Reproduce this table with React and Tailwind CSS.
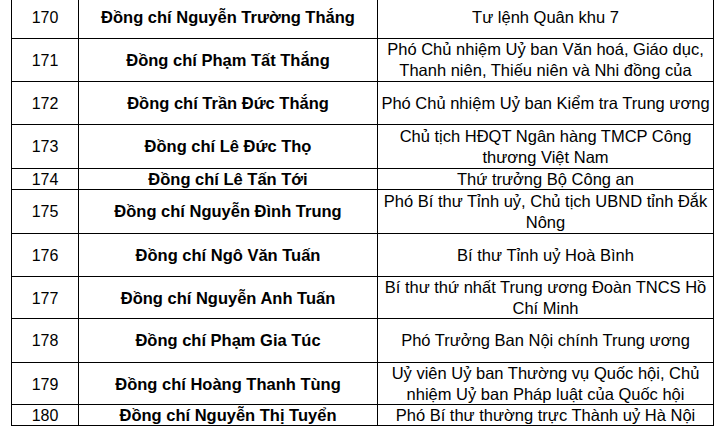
import React from "react";

const rows = [
  { n: "170", name: "Đồng chí Nguyễn Trường Thắng", role: ["Tư lệnh Quân khu 7"], h: 39, first: true },
  { n: "171", name: "Đồng chí Phạm Tất Thắng", role: ["Phó Chủ nhiệm Uỷ ban Văn hoá, Giáo dục,", "Thanh niên, Thiếu niên và Nhi đồng của"], h: 43 },
  { n: "172", name: "Đồng chí Trần Đức Thắng", role: ["Phó Chủ nhiệm Uỷ ban Kiểm tra Trung ương"], h: 43 },
  { n: "173", name: "Đồng chí Lê Đức Thọ", role: ["Chủ tịch HĐQT Ngân hàng TMCP Công", "thương Việt Nam"], h: 44 },
  { n: "174", name: "Đồng chí Lê Tấn Tới", role: ["Thứ trưởng Bộ Công an"], h: 21 },
  { n: "175", name: "Đồng chí Nguyễn Đình Trung", role: ["Phó Bí thư Tỉnh uỷ, Chủ tịch UBND tỉnh Đắk", "Nông"], h: 44 },
  { n: "176", name: "Đồng chí Ngô Văn Tuấn", role: ["Bí thư Tỉnh uỷ Hoà Bình"], h: 43 },
  { n: "177", name: "Đồng chí Nguyễn Anh Tuấn", role: ["Bí thư thứ nhất Trung ương Đoàn TNCS Hồ", "Chí Minh"], h: 42 },
  { n: "178", name: "Đồng chí Phạm Gia Túc", role: ["Phó Trưởng Ban Nội chính Trung ương"], h: 44 },
  { n: "179", name: "Đồng chí Hoàng Thanh Tùng", role: ["Uỷ viên Uỷ ban Thường vụ Quốc hội, Chủ", "nhiệm Uỷ ban Pháp luật của Quốc hội"], h: 42 },
  { n: "180", name: "Đồng chí Nguyễn Thị Tuyển", role: ["Phó Bí thư thường trực Thành uỷ Hà Nội"], h: 21 },
];

export default function App() {
  return (
    <div
      className="w-[726px] h-[434px] bg-white overflow-hidden text-black text-[16.5px] leading-[21px]"
      style={{ fontFamily: '"Liberation Sans", Arial, sans-serif' }}
    >
      <div className="ml-[11px] w-[703px] border-l border-black">
        {rows.map((r) => (
          <div
            key={r.n}
            className="grid grid-cols-[67px_299px_336px] border-b border-black"
            style={{ height: r.h }}
          >
            <div className={`flex items-center justify-center border-r border-black text-[16px] ${r.first ? "pb-[4px]" : ""}`}>
              {r.n}
            </div>
            <div className={`flex items-center justify-center border-r border-black font-bold whitespace-nowrap ${r.first ? "pb-[4px]" : ""}`}>
              {r.name}
            </div>
            <div className={`flex flex-col items-center justify-center border-r border-black text-center whitespace-nowrap ${r.first ? "pb-[4px]" : ""}`}>
              {r.role.map((l, i) => (
                <span key={i}>{l}</span>
              ))}
            </div>
          </div>
        ))}
      </div>
    </div>
  );
}
